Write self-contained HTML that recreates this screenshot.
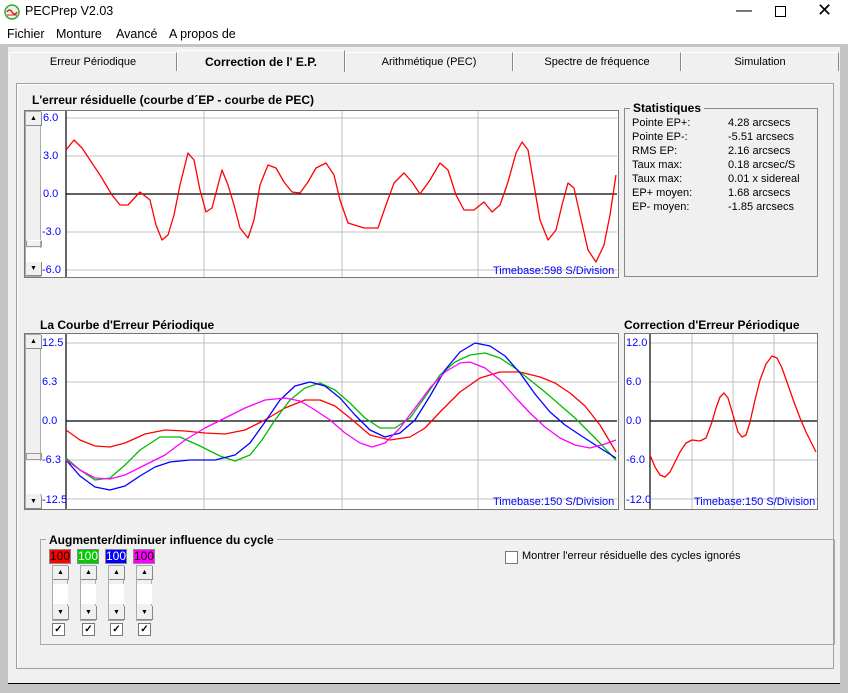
<!DOCTYPE html><html><head><meta charset="utf-8"><style>
*{box-sizing:border-box;margin:0;padding:0}
body{width:848px;height:693px;background:#f0f0f0;font-family:"Liberation Sans",sans-serif;font-size:12px;position:relative;overflow:hidden;color:#000}
.a{position:absolute}
.tab{position:absolute;top:52px;height:19px;text-align:center;font-size:11px;line-height:18px;border-top:1px solid #fff;border-left:1px solid #fff;border-right:1px solid #888}
.b{font-weight:bold}
.lbl{position:absolute;color:#0000ff;font-size:11px}
.sb{position:absolute;background:#f0f0f0;border:1px solid #aaa}
.arr{position:absolute;left:0;width:16px;height:14px;background:#f0f0f0;border-right:1px solid #888;border-bottom:1px solid #888;font-size:7px;text-align:center;line-height:14px}
.cb{position:absolute;width:13px;height:13px;background:#fff;border:1px solid #777;font-size:10px;line-height:11px;text-align:center;font-weight:bold}
</style></head><body>
<div class="a" style="left:0;top:0;width:848px;height:24px;background:#fff"></div>
<svg class="a" style="left:4px;top:4px" width="16" height="16"><circle cx="8" cy="8" r="7" fill="#e8f3e8" stroke="#3a3" stroke-width="1.5"/><path d="M3 8 q2.5-4 5 0 t5 0" stroke="#d22" fill="none" stroke-width="1.5"/><line x1="3" y1="11" x2="13" y2="11" stroke="#d22"/></svg>
<div class="a" style="left:25px;top:4px;font-size:12.5px">PECPrep V2.03</div>
<div class="a" style="left:736px;top:2px;font-size:16px;width:100px">—</div>
<div class="a" style="left:775px;top:6px;width:11px;height:11px;border:1px solid #000"></div>
<div class="a" style="left:817px;top:0px;font-size:18px">✕</div>
<div class="a" style="left:0;top:24px;width:848px;height:20px;background:#fff"></div>
<div class="a" style="left:7px;top:27px;font-size:12.5px">Fichier</div>
<div class="a" style="left:56px;top:27px;font-size:12.5px">Monture</div>
<div class="a" style="left:116px;top:27px;font-size:12.5px">Avancé</div>
<div class="a" style="left:169px;top:27px;font-size:12.5px">A propos de</div>
<div class="a" style="left:0;top:44px;width:848px;height:649px;background:#c4c4c4"></div>
<div class="a" style="left:8px;top:47px;width:832px;height:637px;background:#f0f0f0;border-bottom:1px solid #000"></div>
<div class="tab" style="left:9px;width:168px">Erreur Périodique</div>
<div class="tab b" style="left:177px;top:50px;height:22px;width:168px;line-height:22px;background:#f0f0f0;font-size:12px">Correction de l' E.P.</div>
<div class="tab" style="left:345px;width:168px">Arithmétique (PEC)</div>
<div class="tab" style="left:513px;width:168px">Spectre de fréquence</div>
<div class="tab" style="left:681px;width:158px">Simulation</div>
<div class="a" style="left:16px;top:83px;width:818px;height:586px;border:1px solid #a0a0a0;box-shadow:1px 1px 0 #fff inset"></div>
<div class="a b" style="left:32px;top:93px;font-size:12px">L'erreur résiduelle (courbe d´EP - courbe de PEC)</div>
<div class="a b" style="left:40px;top:318px;font-size:12px">La Courbe d'Erreur Périodique</div>
<div class="a b" style="left:624px;top:318px;font-size:12px">Correction d'Erreur Périodique</div>
<div class="a" style="left:624px;top:108px;width:194px;height:169px;border:1px solid #888"></div>
<div class="a b" style="left:630px;top:101px;background:#f0f0f0;padding:0 3px;font-size:12px">Statistiques</div>
<div class="a" style="left:632px;top:116px;font-size:11px;line-height:14px">Pointe EP+:<br>Pointe EP-:<br>RMS EP:<br>Taux max:<br>Taux max:<br>EP+ moyen:<br>EP- moyen:</div>
<div class="a" style="left:728px;top:116px;font-size:11px;line-height:14px">4.28 arcsecs<br>-5.51 arcsecs<br>2.16 arcsecs<br>0.18 arcsec/S<br>0.01 x sidereal<br>1.68 arcsecs<br>-1.85 arcsecs</div>
<div class="a" style="left:24px;top:110px;width:595px;height:168px;border:1px solid #777;background:#fff"></div>
<div class="a" style="left:24px;top:333px;width:595px;height:177px;border:1px solid #777;background:#fff"></div>
<div class="a" style="left:624px;top:333px;width:194px;height:177px;border:1px solid #777;background:#fff"></div>
<div class="sb" style="left:25px;top:111px;width:16px;height:166px"><div class="arr" style="top:0">▲</div><div class="a" style="left:0;top:128px;width:16px;height:7px;border:1px solid #999;border-top:1px solid #fff"></div><div class="a" style="left:0;top:136px;width:15px;height:14px;background:#fff"></div><div class="arr" style="top:150px">▼</div></div>
<div class="sb" style="left:25px;top:334px;width:16px;height:175px"><div class="arr" style="top:0">▲</div><div class="a" style="left:0;top:118px;width:16px;height:7px;border:1px solid #999"></div><div class="a" style="left:0;top:126px;width:15px;height:33px;background:#fff"></div><div class="arr" style="top:160px">▼</div></div>
<svg class="a" style="left:0;top:0" width="848" height="693">
<g stroke="#c0c0c0" stroke-width="1">
<path d="M66 118H617M66 156H617M66 232H617M66 270H617M204 111V277M342 111V277M478 111V277"/>
<path d="M66 343H617M66 382H617M66 460H617M66 499H617M204 334V509M342 334V509M478 334V509"/>
<path d="M650 343H817M650 382H817M650 460H817M650 499H817M692 334V509M733 334V509M774 334V509"/>
</g>
<g stroke="#000" stroke-width="1.2"><path d="M66 111V277M66 194H617M66 334V509M66 421H617M650 334V509M650 421H817"/></g>
<g fill="none" stroke-width="1.3" stroke-linejoin="round">
<polyline stroke="#f00" points="66,150 74,140 82,148 100,175 112,195 120,205 128,205 140,192 150,200 156,225 162,240 168,235 174,215 180,185 188,153 194,160 200,190 206,212 212,208 222,170 228,185 234,205 240,228 248,238 254,220 260,185 268,165 276,168 284,182 292,192 300,193 308,182 316,168 326,163 334,175 340,200 348,223 364,228 378,228 386,205 394,183 404,173 412,182 420,194 430,180 440,163 448,170 456,195 464,210 474,210 484,202 492,212 500,205 508,182 516,153 522,142 528,150 534,185 540,220 548,240 556,230 562,205 568,183 574,188 580,215 588,250 596,262 604,245 610,215 616,175"/>
<polyline stroke="#f00" points="66,430 80,440 95,446 110,447 125,443 145,434 165,430 185,431 205,433 225,434 245,430 265,420 285,408 305,400 320,400 335,406 350,418 370,435 390,440 410,437 425,428 440,412 460,392 480,378 500,372 520,372 540,377 555,383 570,393 585,406 600,425 616,452"/>
<polyline stroke="#0b0" points="66,458 80,470 95,480 110,478 125,465 140,450 160,437 180,437 200,446 220,456 235,461 250,455 262,440 275,420 290,400 305,388 320,383 335,390 350,403 365,418 380,428 395,428 410,418 425,397 440,375 455,362 470,355 485,353 500,358 515,368 530,380 545,392 560,405 575,418 595,438 616,460"/>
<polyline stroke="#00f" points="66,460 80,476 95,487 110,490 125,486 140,476 155,467 170,462 190,460 215,460 235,455 250,443 265,422 280,400 295,386 310,382 325,386 340,398 355,415 370,430 385,437 400,433 415,420 430,396 445,370 460,352 475,343 490,346 505,356 520,373 535,394 550,412 565,425 580,435 600,448 616,458"/>
<polyline stroke="#f0f" points="66,460 80,470 95,478 110,479 125,475 145,465 165,455 185,440 205,428 225,418 245,408 265,400 285,398 300,401 315,410 330,420 345,433 360,443 372,447 385,443 400,428 415,408 430,388 445,372 460,363 470,362 485,368 500,380 515,397 530,413 545,427 560,438 575,445 590,448 605,444 616,440"/>
<polyline stroke="#f00" points="650,455 655,467 660,475 665,477 670,472 675,462 680,452 686,443 692,440 700,441 706,438 712,422 716,408 720,397 724,393 728,398 733,415 738,432 742,437 746,435 750,422 755,400 760,380 766,364 772,356 777,358 782,368 788,385 794,402 800,418 806,432 812,444 816,452"/>
</g>
</svg>
<div class="lbl" style="left:43px;top:112px">6.0</div>
<div class="lbl" style="left:43px;top:150px">3.0</div>
<div class="lbl" style="left:43px;top:188px">0.0</div>
<div class="lbl" style="left:42px;top:226px">-3.0</div>
<div class="lbl" style="left:42px;top:264px">-6.0</div>
<div class="lbl" style="left:493px;top:265px">Timebase:598 S/Division</div>
<div class="lbl" style="left:42px;top:337px">12.5</div>
<div class="lbl" style="left:42px;top:376px">6.3</div>
<div class="lbl" style="left:42px;top:415px">0.0</div>
<div class="lbl" style="left:42px;top:454px">-6.3</div>
<div class="lbl" style="left:42px;top:494px">-12.5</div>
<div class="lbl" style="left:493px;top:496px">Timebase:150 S/Division</div>
<div class="lbl" style="left:626px;top:337px">12.0</div>
<div class="lbl" style="left:626px;top:376px">6.0</div>
<div class="lbl" style="left:626px;top:415px">0.0</div>
<div class="lbl" style="left:626px;top:454px">-6.0</div>
<div class="lbl" style="left:626px;top:494px">-12.0</div>
<div class="lbl" style="left:694px;top:496px">Timebase:150 S/Division</div>
<div class="a" style="left:40px;top:539px;width:795px;height:106px;border:1px solid #aaa"></div>
<div class="a b" style="left:46px;top:533px;background:#f0f0f0;padding:0 3px;font-size:12px">Augmenter/diminuer influence du cycle</div>
<div class="a" style="left:49px;top:549px;width:22px;height:15px;background:#f00;border:1px solid #888;font-size:12px;line-height:13px;color:#000">100</div>
<div class="a" style="left:77px;top:549px;width:22px;height:15px;background:#0c0;border:1px solid #888;font-size:12px;line-height:13px;color:#fff">100</div>
<div class="a" style="left:105px;top:549px;width:22px;height:15px;background:#00f;border:1px solid #888;font-size:12px;line-height:13px;color:#fff">100</div>
<div class="a" style="left:133px;top:549px;width:22px;height:15px;background:#f0f;border:1px solid #888;font-size:12px;line-height:13px;color:#000">100</div>
<div class="sb" style="left:52px;top:565px;width:16px;height:56px"><div class="arr" style="top:0">▲</div><div class="a" style="left:0;top:18px;width:15px;height:20px;background:#fff"></div><div class="arr" style="top:40px">▼</div></div>
<div class="sb" style="left:80px;top:565px;width:16px;height:56px"><div class="arr" style="top:0">▲</div><div class="a" style="left:0;top:18px;width:15px;height:20px;background:#fff"></div><div class="arr" style="top:40px">▼</div></div>
<div class="sb" style="left:108px;top:565px;width:16px;height:56px"><div class="arr" style="top:0">▲</div><div class="a" style="left:0;top:18px;width:15px;height:20px;background:#fff"></div><div class="arr" style="top:40px">▼</div></div>
<div class="sb" style="left:136px;top:565px;width:16px;height:56px"><div class="arr" style="top:0">▲</div><div class="a" style="left:0;top:18px;width:15px;height:20px;background:#fff"></div><div class="arr" style="top:40px">▼</div></div>
<div class="cb" style="left:52px;top:623px">✓</div>
<div class="cb" style="left:82px;top:623px">✓</div>
<div class="cb" style="left:110px;top:623px">✓</div>
<div class="cb" style="left:138px;top:623px">✓</div>
<div class="cb" style="left:505px;top:551px"></div>
<div class="a" style="left:522px;top:550px;font-size:11px">Montrer l'erreur résiduelle des cycles ignorés</div>
</body></html>
